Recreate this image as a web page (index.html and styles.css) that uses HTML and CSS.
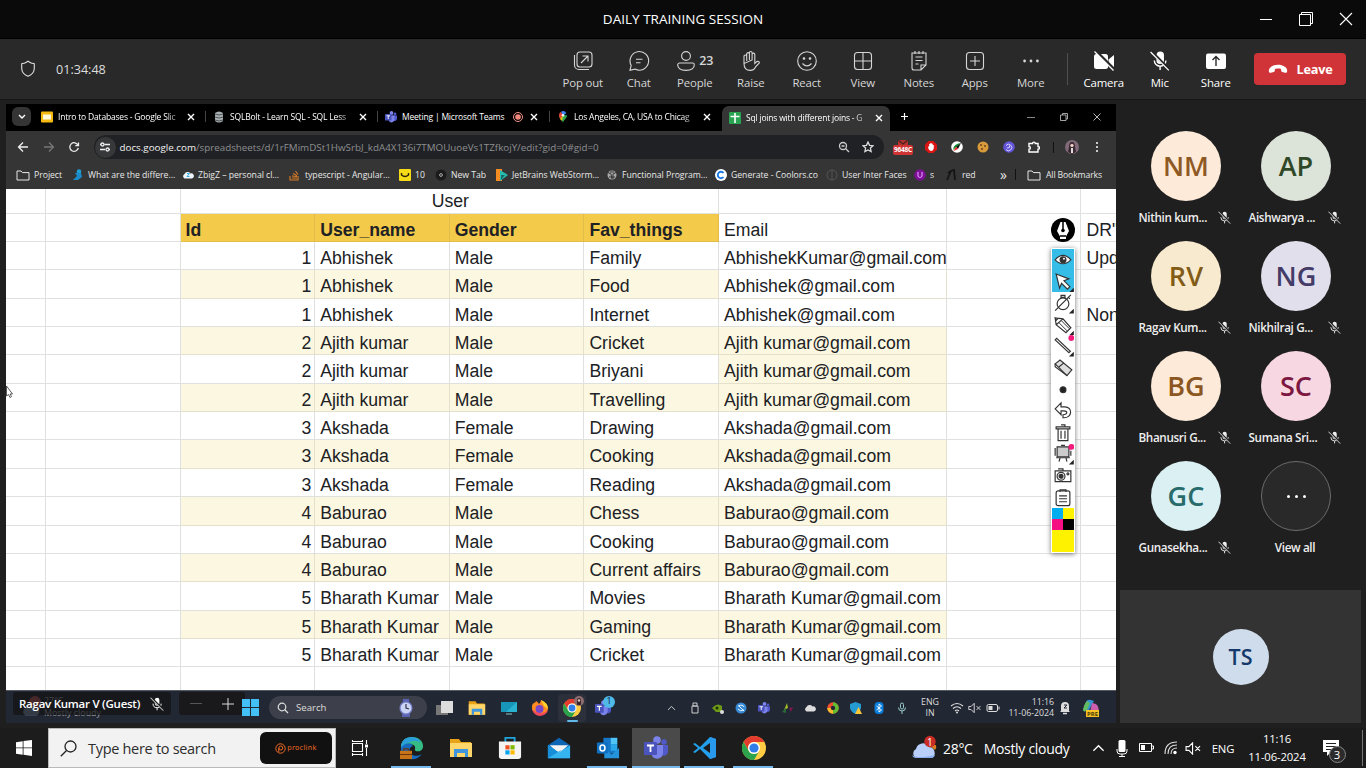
FILE: index.html
```html
<!DOCTYPE html>
<html lang="en">
<head>
<meta charset="utf-8">
<title>DAILY TRAINING SESSION</title>
<link rel="stylesheet" href="styles.css">
</head>
<body>
<svg class="defs" width="0" height="0">
  <symbol id="micoff" viewBox="0 0 20 20"><rect x="7" y="1" width="6.4" height="11.5" rx="3.2" fill="currentColor"/><path d="M4.3 9.5a5.8 5.8 0 0 0 11.6 0M10.1 15.5V19" fill="none" stroke="currentColor" stroke-width="1.4"/><path d="M1.2.5 19.5 18.8" stroke="#242424" stroke-width="3"/><path d="M.6 1 18.8 19.4" stroke="currentColor" stroke-width="1.3"/></symbol>
  <symbol id="x" viewBox="0 0 10 10"><path d="M2 2l6 6M8 2L2 8" stroke="currentColor" stroke-width="1.4"/></symbol>
  <symbol id="folder" viewBox="0 0 14 12"><path d="M1 2h4l1.4 1.6H13V11H1z" fill="none" stroke="currentColor"/></symbol>
  <symbol id="explorer" viewBox="0 0 24 24"><path d="M1 3h9l2 3h10v15H1z" fill="#e8a317"/><path d="M1 7h22v14H1z" fill="#ffd669"/><path d="M5 21v-8h14v8h-3v-4H8v4z" fill="#3f96dc"/></symbol>
  <symbol id="chrome" viewBox="0 0 24 24"><circle cx="12" cy="12" r="12" fill="#fc4"/><path d="M1.6 6A12 12 0 0 1 22.4 6H12a6 6 0 0 0-5.2 9z" fill="#e33b2e"/><path d="M1.6 6A12 12 0 0 0 12 24l5.2-9a6 6 0 0 1-10.4 0z" fill="#2ba24c"/><circle cx="12" cy="12" r="6" fill="#fff"/><circle cx="12" cy="12" r="4.6" fill="#2f7de9"/></symbol>
  <symbol id="teams" viewBox="0 0 24 24"><circle cx="20" cy="6" r="2.8" fill="#5059c9"/><path d="M14 9h10v7a4.500 4.500 0 0 1-7 3z" fill="#5059c9"/><circle cx="13" cy="4" r="3.800" fill="#7b83eb"/><path d="M8 9h11v8a6 6 0 0 1-11 3z" fill="#7b83eb"/><rect y="6" width="13" height="13" rx="1" fill="#4b53bc"/><path d="M3 9.500h7M6.500 9.500V16" stroke="#fff" stroke-width="1.800"/></symbol>
  <symbol id="win" viewBox="0 0 16 16"><path d="M0 0h7.500v7.500H0zM8.500 0H16v7.500H8.500zM0 8.500h7.500V16H0zM8.500 8.500H16V16H8.500z" fill="currentColor"/></symbol>
  <symbol id="mute" viewBox="0 0 18 14"><path d="M1 5h3l4-4v12L4 9H1zM11 4.500l5 5m0-5l-5 5" fill="none" stroke="currentColor" stroke-width="1.200"/></symbol>
  <symbol id="cloud" viewBox="0 0 24 16"><path d="M5 15a5 5 0 0 1 0-9 7 7 0 0 1 12-1 5 5 0 0 1 3 10z" fill="currentColor"/></symbol>
  <symbol id="up" viewBox="0 0 14 8"><path d="M1.500 7L7 1.500 12.500 7" fill="none" stroke="currentColor" stroke-width="1.400"/></symbol>
</svg>

<header class="titlebar">
  <h1>DAILY TRAINING SESSION</h1>
  <div class="winctl">
    <svg width="14" height="14"><path d="M1 7.500h12" stroke="#fff"/></svg>
    <svg width="16" height="16"><path d="M1.500 3.500h11v11h-11zM3.500 3.500v-2h11v11h-2" fill="none" stroke="#fff"/></svg>
    <svg width="14" height="14"><path d="M1 1l12 12M13 1L1 13" stroke="#fff" stroke-width="1.100"/></svg>
  </div>
</header>

<nav class="callbar">
  <div class="timer"><svg width="16" height="18" viewBox="0 0 16 18"><path d="M8 1.300c2 1.600 4 2.300 6.300 2.400V8c0 4-2.500 6.800-6.300 8.300C4.200 14.800 1.700 12 1.700 8V3.700C4 3.600 6 2.900 8 1.300z" fill="none" stroke="#e0e0e0" stroke-width="1.100"/></svg><span>01:34:48</span></div>
  <div class="actions">
    <div class="act"><svg viewBox="0 0 20 20"><rect x="4" y="1" width="15" height="15" rx="3"/><path d="M1.500 4v10a4.500 4.500 0 0 0 4.500 4.500h10M8 12l6.500-6.500M9.500 5h5.500v5.500"/></svg><span>Pop out</span></div>
    <div class="act"><svg viewBox="0 0 20 20"><path d="M1 19.200l1.200-4.800A9.300 9.300 0 1 1 6 18.100zM7 8.300h6.500M7 11.800h4.500"/></svg><span>Chat</span></div>
    <div class="act"><div class="pair"><svg viewBox="0 0 20 20"><circle cx="10" cy="5" r="4.400"/><path d="M3.500 12h13a1.800 1.800 0 0 1 1.800 1.800C18.300 17.500 15 19.400 10 19.400S1.700 17.500 1.700 13.800A1.800 1.800 0 0 1 3.500 12z"/></svg><b>23</b></div><span>People</span></div>
    <div class="act"><svg viewBox="0 0 20 20"><path d="M3 12.500V5.300a1.300 1.300 0 0 1 2.700 0V10M5.700 9V3a1.300 1.300 0 0 1 2.700 0V9M8.400 9V1.900a1.300 1.300 0 0 1 2.700 0V9M11.100 9V3.500a1.300 1.300 0 0 1 2.700 0V12.500l1.700-1.700c1.400-1 3.300 0 2.800 1.200l-3.500 3.500c-1.200 3-2.800 3.900-5.600 3.900C5 19.400 3 17 3 12.500z"/></svg><span>Raise</span></div>
    <div class="act"><svg viewBox="0 0 20 20"><circle cx="10" cy="10" r="9.300"/><path d="M5.500 12.500q4.500 4.800 9 0"/><circle cx="7" cy="7.500" r=".8" fill="currentColor"/><circle cx="13" cy="7.500" r=".8" fill="currentColor"/></svg><span>React</span></div>
    <div class="act"><svg viewBox="0 0 20 20"><rect x="1.500" y="1.500" width="17" height="17" rx="3"/><path d="M10 1.500v17M1.500 10h17"/></svg><span>View</span></div>
    <div class="act"><svg viewBox="0 0 20 20"><path d="M3 2h14v12l-5 5H5a2 2 0 0 1-2-2zM17 14h-5v5M6.500 6h7M6.500 9.500h7M6.500 13h3M6 0v3M10 0v3M14 0v3"/></svg><span>Notes</span></div>
    <div class="act"><svg viewBox="0 0 20 20"><rect x="1.500" y="1.500" width="17" height="17" rx="3"/><path d="M10 5v10M5 10h10"/></svg><span>Apps</span></div>
    <div class="act"><svg viewBox="0 0 20 20"><g fill="currentColor" stroke="none"><circle cx="3.600" cy="10" r="1.400"/><circle cx="10" cy="10" r="1.400"/><circle cx="16.400" cy="10" r="1.400"/></g></svg><span>More</span></div>
  </div>
  <i class="rule"></i>
  <div class="actions bright">
    <div class="act"><svg viewBox="0 0 20 20"><g stroke="none" fill="#fff"><rect y="3" width="14" height="15" rx="2.500"/><path d="M14.500 8.500L20 4v13l-5.500-4z"/></g><path d="M2.500.5L20 18" stroke="#292929" stroke-width="2.600"/><path d="M.5.500L19.500 19.500" stroke="#fff" stroke-width="1.300"/></svg><span>Camera</span></div>
    <div class="act"><svg viewBox="0 0 20 20"><use href="#micoff"/></svg><span>Mic</span></div>
    <div class="act"><svg viewBox="0 0 20 20"><rect x="0" y="2.500" width="20" height="15.500" rx="2" fill="#fff" stroke="none"/><path d="M10 15V6M6.500 9L10 5.500 13.500 9" stroke="#292929" stroke-width="1.400"/></svg><span>Share</span></div>
  </div>
  <button class="leave"><svg width="20" height="10" viewBox="0 0 20 10"><path d="M.8 7C.5 3.500 5 .8 10 .8s9.500 2.700 9.200 6.200c-.2 1.800-1 2-2.200 1.700l-2.700-.6c-1.600-.5-1-2.600-1.300-3.100-1-.8-5-.8-6 0-.3.500.3 2.600-1.300 3.100L3 8.700C1.800 9 1 8.800.8 7z" fill="#fff"/></svg>Leave</button>
</nav>

<main class="stage">
  <section class="share">
    <div class="tabs">
      <div class="tabmenu"><svg width="8" height="6"><path d="M1 1l3 3 3-3" fill="none" stroke="#fff" stroke-width="1.400"/></svg></div>
      <div class="tab"><svg viewBox="0 0 12 12"><rect y=".5" width="12" height="11" rx="1" fill="#f5b912"/><rect x="2" y="3.500" width="8" height="5" fill="#fff8dc"/></svg><span>Intro to Databases - Google Slic</span><svg class="cls"><use href="#x"/></svg></div>
      <div class="tab"><svg viewBox="0 0 12 12"><path d="M2 2q4-3 8 0v8q-4 3-8 0z" fill="#aab0b2"/><path d="M2 3q4 2 8 0M2 6q4 2 8 0M2 9q4 2 8 0" fill="none" stroke="#495152"/></svg><span>SQLBolt - Learn SQL - SQL Less</span><svg class="cls"><use href="#x"/></svg></div>
      <div class="tab rec"><svg viewBox="0 0 24 24"><use href="#teams"/></svg><span>Meeting | Microsoft Teams</span><svg viewBox="0 0 12 12"><circle cx="6" cy="6" r="4.500" fill="none" stroke="#ef938a"/><circle cx="6" cy="6" r="2.800" fill="#f1877b"/></svg><svg class="cls"><use href="#x"/></svg></div>
      <div class="tab"><svg viewBox="0 0 12 12"><path d="M6 12C5.500 8.500 2 7.500 2 4.200h8C10 7.500 6.500 8.500 6 12z" fill="#32a853"/><path d="M2 4.500a4 4 0 0 1 2-3.800l2 3.500L3 8z" fill="#e84335"/><path d="M4 .7A4 4 0 0 1 9.400 2.200L6 4.500z" fill="#4285f4"/><path d="M6 4.500L3 8c1 1 1.500 1.500 2 2z" fill="#fbbc04"/><circle cx="6" cy="4.200" r="1.300" fill="#fff"/></svg><span>Los Angeles, CA, USA to Chicag</span><svg class="cls"><use href="#x"/></svg></div>
      <div class="tab on"><svg viewBox="0 0 12 12"><rect width="12" height="12" rx="1" fill="#2aa351"/><path d="M6 1v10M1.500 4.500h9" stroke="#fff" stroke-width="1.600"/></svg><span>Sql joins with different joins - G</span><svg class="cls"><use href="#x"/></svg></div>
      <svg class="plus" width="9" height="9"><path d="M4.500 1v7M1 4.500h7" stroke="#fff" stroke-width="1.200"/></svg>
      <div class="bctl">
        <svg width="10" height="10"><path d="M1 5.500h8" stroke="#888"/></svg>
        <svg width="10" height="10"><path d="M1.500 3h5.500v5.500H1.500zM3.500 3V1.500h5V7H7" fill="none" stroke="#ccc" stroke-width=".8"/></svg>
        <svg width="10" height="10"><path d="M1.500 1.500l7 7M8.500 1.500l-7 7" stroke="#ccc" stroke-width=".9"/></svg>
      </div>
    </div>
    <div class="address">
      <svg viewBox="0 0 12 12"><path d="M11 6H1.500M6 1.500L1.500 6 6 10.500" stroke="#eee"/></svg>
      <svg viewBox="0 0 12 12"><path d="M1 6h9.500M6 1.500L10.500 6 6 10.500" stroke="#777"/></svg>
      <svg viewBox="0 0 12 12"><path d="M10 4.200A4.300 4.300 0 1 0 10.300 7M10.500 1.500v3.200H7.300" stroke="#eee"/></svg>
      <div class="omni">
        <i class="tune"><svg viewBox="0 0 12 12"><path d="M1 3.500h1M5.500 3.500H11M1 8.500h5M10 8.500H11" stroke="#eee"/><circle cx="3.500" cy="3.500" r="1.500" stroke="#eee"/><circle cx="8.500" cy="8.500" r="1.500" stroke="#eee"/></svg></i>
        <p><b>docs.google.com</b>/spreadsheets/d/1rFMimDSt1HwSrbJ_kdA4X136i7TMOUuoeVs1TZfkojY/edit?gid=0#gid=0</p>
        <svg viewBox="0 0 12 12"><circle cx="5" cy="5" r="3.500" stroke="#ccc"/><path d="M7.500 7.500L11 11M3.500 5h3" stroke="#ccc"/></svg>
        <svg viewBox="0 0 12 12"><path d="M6 1l1.500 3.300 3.500.4-2.600 2.400.7 3.500L6 8.900l-3.100 1.700.7-3.500L1 4.700l3.500-.4z" stroke="#ddd"/></svg>
      </div>
      <div class="exts">
        <div class="mailx"><svg width="10" height="5"><path d="M0 0h10v5H0z" fill="#b3322d"/><path d="M0 0l5 4 5-4" fill="none" stroke="#4a2220"/></svg><b>9648C</b></div>
        <svg viewBox="0 0 12 12"><path d="M3.500 0h5L12 3.500v5L8.500 12h-5L0 8.500v-5z" fill="#d91515" /><path d="M3.200 5.500h1V3h1.100V2h1.200v.7h1.200V4h1.100v3.500Q8 10 6 10T3.200 7z" fill="#fff"/></svg>
        <svg viewBox="0 0 12 12"><circle cx="6" cy="6" r="5.800" fill="#fff"/><path d="M10 2L2 9Q2 3 10 2z" fill="#168c35"/><path d="M5 6l5-4-3 6z" fill="#111"/><path d="M2.500 10l2.500-4 2 2z" fill="#e22"/></svg>
        <svg viewBox="0 0 12 12"><circle cx="6" cy="6" r="5.500" fill="#d99a3b"/><circle cx="4" cy="4" r="1" fill="#6d431b"/><circle cx="8" cy="5" r="1" fill="#6d431b"/><circle cx="5" cy="8" r="1" fill="#6d431b"/></svg>
        <svg viewBox="0 0 12 12"><circle cx="6" cy="6" r="5.800" fill="#6355d8"/><path d="M3 8.500a3.200 3.200 0 1 0 0-4M4 7l2.500-.5V4.500" stroke="#d5d2ff" stroke-width="1"/></svg>
        <svg viewBox="0 0 12 12"><path d="M1 2.500h3.500a1.400 1.400 0 0 1 2.800 0H10v3a1.400 1.400 0 0 1 0 2.800V11H1V8.300a1.400 1.400 0 0 0 0-2.800z" stroke="#fff" stroke-width="1.400"/></svg>
        <i class="bar"></i>
        <svg class="face" viewBox="0 0 14 14"><circle cx="7" cy="7" r="7" fill="#806a78"/><path d="M4 7q0-5 3-5t3 5l1 5-4 2-4-2z" fill="#38272f"/><circle cx="7" cy="5.500" r="1.700" fill="#e8c9c4"/><path d="M6 8h2v5H6z" fill="#ddd"/></svg>
        <svg viewBox="0 0 12 12"><g fill="#eee"><circle cx="6" cy="2" r="1.100"/><circle cx="6" cy="6" r="1.100"/><circle cx="6" cy="10" r="1.100"/></g></svg>
      </div>
    </div>
    <div class="marks">
      <span><svg class="wide"><use href="#folder"/></svg>Project</span>
      <span><svg viewBox="0 0 12 12"><circle cx="7" cy="2.500" r="2.300" fill="#1f9ed4"/><path d="M3 4h6l1 4-4 3H1l4-4z" fill="#188bc8"/></svg>What are the differe...</span>
      <span><svg viewBox="0 0 24 20"><use href="#cloud" color="#eef7ff" height="20"/><path d="M10 7h5l-5 6h5" fill="none" stroke="#38a8e2" stroke-width="2"/></svg>ZbigZ – personal cl...</span>
      <span><svg viewBox="0 0 12 12"><path d="M1 7v4h8V7M3 9h5M3 7l5 .5M4 4.500l4 2M6.500 2L9 5.500" fill="none" stroke="#dc7c26" stroke-width="1.100"/></svg>typescript - Angular...</span>
      <span><svg viewBox="0 0 12 12"><rect width="12" height="12" rx="1" fill="#f5dc16"/><path d="M2.500 4v2q3.500 3 7 0V4" fill="none" stroke="#282508" stroke-width="1.400"/></svg>10</span>
      <span><svg viewBox="0 0 12 12"><circle cx="6" cy="6" r="5.500" fill="#1b1b1b"/><circle cx="6" cy="6" r="1.400" fill="none" stroke="#aaa"/></svg>New Tab</span>
      <span><svg viewBox="0 0 12 12"><path d="M0 0h6v12H0z" fill="#f58c22"/><path d="M4 1l8 5-8 6z" fill="#27bdae"/><path d="M5 6l4 0-4 5z" fill="#186c69"/></svg>JetBrains WebStorm...</span>
      <span><svg viewBox="0 0 12 12"><circle cx="6" cy="6" r="4.500" fill="#aaa"/><path d="M1 3l4 2 1 5M11 3L7 5v5M3 8h6M4 3h4" fill="none" stroke="#333"/></svg>Functional Program...</span>
      <span><svg viewBox="0 0 12 12"><circle cx="6" cy="6" r="6" fill="#fff"/><path d="M8.500 4a3.200 3.200 0 1 0 0 4" fill="none" stroke="#1679e8" stroke-width="1.900"/></svg>Generate - Coolors.co</span>
      <span><svg viewBox="0 0 12 12"><circle cx="6" cy="6" r="5" fill="none" stroke="#555"/><path d="M6 1v10" stroke="#555"/></svg>User Inter Faces</span>
      <span><svg viewBox="0 0 12 12"><circle cx="6" cy="6" r="5.800" fill="#7c1193"/><path d="M4 3v4q2 3 4 0V3" fill="none" stroke="#df90ff" stroke-width="1.200"/></svg>s</span>
      <span><svg viewBox="0 0 12 12"><path d="M1 11L5 2l3-1 1 10M5 2L2 4" fill="none" stroke="#151515" stroke-width="1.800"/></svg>red</span>
      <span class="more">»</span><i class="bar"></i>
      <span class="allmarks"><svg class="wide"><use href="#folder"/></svg>All Bookmarks</span>
    </div>

    <div class="sheet">
      <div class="row first"><p></p><p></p><p class="merged">User</p><p></p><p></p><p></p></div>
      <div class="row head"><p></p><p></p><p>Id</p><p>User_name</p><p>Gender</p><p>Fav_things</p><p>Email</p><p></p><p>DR"</p></div>
      <div class="row"><p></p><p></p><p>1</p><p>Abhishek</p><p>Male</p><p>Family</p><p>AbhishekKumar@gmail.com</p><p></p><p>Upd</p></div>
      <div class="row alt nomail"><p></p><p></p><p>1</p><p>Abhishek</p><p>Male</p><p>Food</p><p>Abhishek@gmail.com</p><p></p><p></p></div>
      <div class="row"><p></p><p></p><p>1</p><p>Abhishek</p><p>Male</p><p>Internet</p><p>Abhishek@gmail.com</p><p></p><p>Non</p></div>
      <div class="row alt"><p></p><p></p><p>2</p><p>Ajith kumar</p><p>Male</p><p>Cricket</p><p>Ajith kumar@gmail.com</p><p></p><p></p></div>
      <div class="row mail"><p></p><p></p><p>2</p><p>Ajith kumar</p><p>Male</p><p>Briyani</p><p>Ajith kumar@gmail.com</p><p></p><p></p></div>
      <div class="row alt"><p></p><p></p><p>2</p><p>Ajith kumar</p><p>Male</p><p>Travelling</p><p>Ajith kumar@gmail.com</p><p></p><p></p></div>
      <div class="row"><p></p><p></p><p>3</p><p>Akshada</p><p>Female</p><p>Drawing</p><p>Akshada@gmail.com</p><p></p><p></p></div>
      <div class="row alt"><p></p><p></p><p>3</p><p>Akshada</p><p>Female</p><p>Cooking</p><p>Akshada@gmail.com</p><p></p><p></p></div>
      <div class="row"><p></p><p></p><p>3</p><p>Akshada</p><p>Female</p><p>Reading</p><p>Akshada@gmail.com</p><p></p><p></p></div>
      <div class="row alt"><p></p><p></p><p>4</p><p>Baburao</p><p>Male</p><p>Chess</p><p>Baburao@gmail.com</p><p></p><p></p></div>
      <div class="row"><p></p><p></p><p>4</p><p>Baburao</p><p>Male</p><p>Cooking</p><p>Baburao@gmail.com</p><p></p><p></p></div>
      <div class="row alt"><p></p><p></p><p>4</p><p>Baburao</p><p>Male</p><p>Current affairs</p><p>Baburao@gmail.com</p><p></p><p></p></div>
      <div class="row"><p></p><p></p><p>5</p><p>Bharath Kumar</p><p>Male</p><p>Movies</p><p>Bharath Kumar@gmail.com</p><p></p><p></p></div>
      <div class="row alt"><p></p><p></p><p>5</p><p>Bharath Kumar</p><p>Male</p><p>Gaming</p><p>Bharath Kumar@gmail.com</p><p></p><p></p></div>
      <div class="row"><p></p><p></p><p>5</p><p>Bharath Kumar</p><p>Male</p><p>Cricket</p><p>Bharath Kumar@gmail.com</p><p></p><p></p></div>
      <div class="row"><p></p><p></p><p></p><p></p><p></p><p></p><p></p><p></p><p></p></div>
      <svg class="cursor" width="8" height="14"><path d="M.5 1v10l2-1.500 1.500 3 1.500-1-1.500-2.500h2.500z" fill="#fff" stroke="#333" stroke-width=".8"/></svg>
      <div class="pen"><svg width="24" height="24" viewBox="0 0 24 24"><circle cx="12" cy="12" r="12"/><path d="M9 21v-2.500L6 13 9.500 4h5L18 13l-3 5.500V21z" fill="#fff"/><path d="M12 3v9M9 18h6" stroke="#000" stroke-width="1.500"/><circle cx="12" cy="12.500" r="1.800"/></svg></div>
      <div class="tools">
        <svg class="sel" viewBox="0 0 22 22"><path d="M3 11q8-9 16 0-8 8-16 0z" fill="#fff"/><circle cx="11" cy="11" r="3" fill="#333"/><circle cx="12" cy="10" r="1" fill="#fff" stroke="none"/></svg>
        <svg class="sel" viewBox="0 0 22 22"><path d="M4 3l13 5-5 2 6 6-2.500 2.500-6-6-2 5z" fill="#fff"/><path class="c" d="M22 17v5h-5z"/></svg>
        <svg viewBox="0 0 22 22"><circle cx="11" cy="12" r="6"/><path d="M9 3.500h4v2H9zM16 5l2 2M19 3L3 19"/><path class="c" d="M22 17v5h-5z"/></svg>
        <svg viewBox="0 0 22 22"><path d="M3 4l8 1 8 9-5 5-10-8zM11 5L4 11M3 4l3 .5-2 2z"/><path d="M7 9l8 8M9.500 7l8 8" stroke-width="1"/><path class="c" d="M22 17v5h-5z"/></svg>
        <svg viewBox="0 0 22 22"><path d="M3 5l14 13 1.500-1.500L4.500 3.500z"/><circle class="m" cx="19.500" cy="3" r="3"/><path class="c" d="M22 17v5h-5z"/></svg>
        <svg viewBox="0 0 22 22"><path d="M3 7l5-4 12 10-5 6z" fill="#ddd"/><path d="M7 10l5-4M3 7v3l12 9"/></svg>
        <svg viewBox="0 0 22 22"><circle cx="11" cy="11" r="3"/></svg>
        <svg viewBox="0 0 22 22"><path d="M3 9l6-6v4h4c8 0 8 12-2 11v-3c5 0 5-4 1-4H9v4z"/></svg>
        <svg viewBox="0 0 22 22"><path d="M6 7h10v12H6zM4 5h14v2H4zM9 3h4v2M9 9v8M13 9v8"/></svg>
        <svg viewBox="0 0 22 22"><path d="M5 4h12v10H5z" fill="#ccc"/><path d="M3 5v8M19 8v5M4 15h14M8 15l-1 4M14 15l1 4M9 2.500h4"/><circle class="m" cx="19.500" cy="4" r="3"/><path class="c" d="M22 17v5h-5z"/></svg>
        <svg viewBox="0 0 22 22"><path d="M3 6h16v11H3zM6 4h5v2"/><circle cx="9" cy="11.500" r="4"/><circle cx="9" cy="11.500" r="2" fill="#333"/><circle cx="16" cy="9" r="1"/></svg>
        <svg viewBox="0 0 22 22"><rect x="4" y="4" width="14" height="15" rx="2"/><path d="M8 5V3h6v2M7 9h8M7 12h8M7 15h8"/></svg>
        <div class="swatch"><i></i><i></i><i></i><i></i></div>
        <div class="yellow"></div>
      </div>
    </div>

    <div class="innerbar">
      <div class="wx"><svg width="22" height="22"><circle cx="14" cy="7" r="6" fill="#b8585e"/><use href="#cloud" x="0" y="9" width="19" height="12" color="#7b8fae"/></svg><p>27°C<br>Mostly cloudy</p></div>
      <div class="speaker">Ragav Kumar V (Guest)<svg><use href="#micoff"/></svg></div>
      <div class="zoomer"><i></i><svg width="12" height="12"><path d="M6 0v12M0 6h12" stroke="#ddd"/></svg></div>
      <svg class="logo"><use href="#win"/></svg>
      <div class="isearch"><svg width="12" height="12"><circle cx="5" cy="5" r="3.800"/><path d="M7.500 7.500L11 11"/></svg><span>Search</span><svg class="watch" width="18" height="18"><path d="M6 0h6l1 18H5z" fill="#5a64b4"/><circle cx="9" cy="9" r="6" fill="#ccd4f6" stroke="#777fc8"/><path d="M9 5v4l3 1" stroke="#334"/></svg></div>
      <div class="iapps">
        <svg viewBox="0 0 18 18"><rect y="6" width="12" height="10" fill="#777"/><rect x="5" y="2" width="12" height="12" fill="#ddd"/></svg>
        <svg><use href="#explorer"/></svg>
        <svg viewBox="0 0 18 18"><path d="M1 3h16v10H1z" fill="#29b3d0"/><path d="M1 3h16L6 13H1z" fill="#1796ba"/><path d="M6 15h6" stroke="#8cc"/></svg>
        <svg viewBox="0 0 18 18"><path d="M1 8C1 3 4 5 5 2q2 1 3 3 2-2 2-4 7 3 7 9a8 7 0 0 1-16-2z" fill="#ff8b22"/><path d="M10 1q7 3 7 9l-4-3z" fill="#ffd42d"/><circle cx="8.500" cy="10" r="4" fill="#7948c6"/><path d="M1 10q2 7 8 7 7-1 8-6-4 4-8 3-4 0-8-4z" fill="#f4495d"/></svg>
        <div class="ichrome"><svg><use href="#chrome"/></svg><svg class="profile" viewBox="0 0 10 10"><circle cx="5" cy="5" r="5" fill="#8d6d70"/><path d="M3 9V5q0-3 2-3t2 3v4z" fill="#3a272c"/><circle cx="5" cy="4.500" r="1.200" fill="#e7cac2"/></svg><i></i></div>
        <div class="iteams"><svg><use href="#teams"/></svg><b>1</b></div>
      </div>
      <div class="itray">
        <svg><use href="#up"/></svg>
        <svg viewBox="0 0 12 12"><path d="M3 4h6v7H3zM4 1h4v3H4z" fill="none" stroke="#ccc"/></svg>
        <svg viewBox="0 0 12 12"><path d="M0 6q5-6 10-2v6H4z" fill="#6d9a18"/><circle cx="5" cy="6" r="1.500" fill="#1d3007"/><circle cx="10" cy="10" r="2" fill="#ddd"/></svg>
        <svg viewBox="0 0 12 12"><circle cx="6" cy="6" r="5.500" fill="#388ad6"/><path d="M3 4q5-2 6 1M3 7q2 3 6 1M4 4l5 5" fill="none" stroke="#e7f5ff"/></svg>
        <svg><use href="#teams"/></svg>
        <svg viewBox="0 0 12 12"><path d="M3 8l3-7 1 5z" fill="#a2bb25"/><path d="M1 10l4-4v5z" fill="#286a35"/><path d="M8 6l4-1-2 5z" fill="#7b184d"/></svg>
        <svg viewBox="0 0 24 18"><use href="#cloud" color="#ddd" height="18"/></svg>
        <svg viewBox="0 0 12 12"><circle cx="6" cy="6" r="4" fill="none" stroke="#ef4e31" stroke-width="3.500"/><path d="M6 2a4 4 0 0 1 0 8" fill="none" stroke="#61bd31" stroke-width="3.500"/><path d="M2 6a4 4 0 0 0 4 4" fill="none" stroke="#f5bc2a" stroke-width="3.500"/></svg>
        <svg viewBox="0 0 12 12"><path d="M5.500 0L11 2v4q-1 4-5.500 6Q1 10 0 6V2z" fill="#269bd1"/><path d="M8.500 5l3.500 7H5z" fill="#f8c839"/></svg>
        <svg viewBox="0 0 12 12"><rect x="1.500" width="9" height="12" rx="4" fill="#0a7fdd"/><path d="M3.500 4l5 4L6 10V2l2.500 2-5 4" fill="none" stroke="#fff" stroke-width=".9"/></svg>
        <svg viewBox="0 0 12 12"><rect x="4.500" y="1" width="3" height="6" rx="1.500" fill="none" stroke="#9cc"/><path d="M2.500 5.500a3.500 3.500 0 0 0 7 0M6 9v3" fill="none" stroke="#9cc"/></svg>
      </div>
      <p class="ilang">ENG<br>IN</p>
      <div class="inet">
        <svg viewBox="0 0 14 12"><path d="M1 4q6-5 12 0M3 6.500q4-3.500 8 0M5 9q2-2 4 0" fill="none" stroke="#ddd" stroke-width="1.100"/><circle cx="7" cy="10.500" r="1" fill="#ddd"/></svg>
        <svg><use href="#mute"/></svg>
        <svg viewBox="0 0 14 12"><rect x="1" y="2.500" width="10.500" height="7" rx="1.500" fill="none" stroke="#ddd"/><path d="M2.500 4h4v4h-4zM12.500 4.500h1v3h-1z" fill="#ddd"/></svg>
      </div>
      <p class="iclock">11:16<br>11-06-2024</p>
      <svg width="12" height="14" viewBox="0 0 12 14"><path d="M2 10V5q0-4 4-4t4 4v5l1 1H1z" fill="#ddd"/><path d="M4 12.500h4" stroke="#ddd" stroke-width="1.500"/><path d="M5 4h3L5 7h3" fill="none" stroke="#242836"/></svg>
      <svg class="pilot" width="17" height="18"><path d="M1 11L4 3q1-3 5-2l3 1-5 9z" fill="#3792d2"/><path d="M5 2q-3 3-4 9 1 3 4 0l3-7z" fill="#63bc61"/><path d="M10 4l4 1q4 3 2 8-4 4-8 0z" fill="#cb5fad"/><rect x="4" y="11" width="13" height="7" fill="#f6c225"/><text x="5" y="17" class="pre">PRE</text></svg>
    </div>
  </section>

  <aside class="people">
    <div class="roster">
      <div class="person"><b class="av nm">NM</b><p><span>Nithin kum...</span><svg><use href="#micoff"/></svg></p></div>
      <div class="person"><b class="av ap">AP</b><p><span>Aishwarya ...</span><svg><use href="#micoff"/></svg></p></div>
      <div class="person"><b class="av rv">RV</b><p><span>Ragav Kum...</span><svg><use href="#micoff"/></svg></p></div>
      <div class="person"><b class="av ng">NG</b><p><span>Nikhilraj G...</span><svg><use href="#micoff"/></svg></p></div>
      <div class="person"><b class="av bg">BG</b><p><span>Bhanusri G...</span><svg><use href="#micoff"/></svg></p></div>
      <div class="person"><b class="av sc">SC</b><p><span>Sumana Sri...</span><svg><use href="#micoff"/></svg></p></div>
      <div class="person"><b class="av gc">GC</b><p><span>Gunasekha...</span><svg><use href="#micoff"/></svg></p></div>
      <div class="person all"><div class="av"><i></i><i></i><i></i></div><p>View all</p></div>
    </div>
    <div class="self"><b>TS</b></div>
  </aside>
</main>

<footer class="taskbar">
  <div class="start"><svg width="16" height="16" viewBox="0 0 16 16"><path d="M0 2.200l6.700-1v6.300H0zM7.500 1.100L16 0v7.500H7.500zM0 8.300h6.700v6.400L0 13.800zM7.500 8.300H16V16l-8.500-1.200z" fill="#fff"/></svg></div>
  <div class="search"><svg width="17" height="17"><circle cx="10.500" cy="6.500" r="5.500"/><path d="M6.500 10.500L.8 16.200"/></svg><span>Type here to search</span><div class="brand"><svg width="11" height="11"><circle cx="5.500" cy="5.500" r="4.700"/><circle cx="5.800" cy="5" r="2"/><path d="M3.800 5v4"/></svg>proclink</div></div>
  <div class="apps">
    <div><svg width="18" height="18" viewBox="0 0 18 18"><path d="M1.500 4.500h10v8h-10zM1.500 1v2M11.500 1v2M1.500 14v3M11.500 14v3M1.500 2.500h10M1.500 15.500h10M15.500 1v4M15.500 9v8" fill="none" stroke="#fff" stroke-width="1.100"/><path d="M14 5.500h3v3h-3z" fill="#fff"/></svg></div>
    <div class="run"><svg class="big" viewBox="0 0 26 26"><path d="M1 13C1 5 6 1 13 1c8 0 12 5 12 10 0 6-8 7-9 4 3-7-9-9-15-2z" fill="#35bc85"/><path d="M1 13C1 5 6 1 13 1q8 1 9 6C15 4 10 5 1 13z" fill="#2b9fd9"/><path d="M1 13c4-6 12-7 13-2-5 1-5 8 1 10 4 1 7 0 9-2-3 5-8 7-13 6-7-1-10-6-10-12z" fill="#1769bd"/><path d="M0 16h13v9H0z" fill="#c87317"/><path d="M4 16v-2h5v2M0 20h13" fill="none" stroke="#6b350d" stroke-width="1.200"/></svg></div>
    <div><svg><use href="#explorer"/></svg></div>
    <div><svg class="big" viewBox="0 0 26 26"><path d="M8 7V2h10v5" fill="none" stroke="#20a5dd" stroke-width="2"/><path d="M1 6h24v16q0 3-3 3H4q-3 0-3-3z" fill="#f4f4f4"/><path d="M8 10h4.500v4.500H8z" fill="#ef5024"/><path d="M13.500 10H18v4.500h-4.500z" fill="#7fba00"/><path d="M8 15.500h4.500V20H8z" fill="#00a4ef"/><path d="M13.500 15.500H18V20h-4.500z" fill="#ffb900"/></svg></div>
    <div><svg class="big" viewBox="0 0 26 26"><path d="M1 10L13 2l12 8v14H1z" fill="#0d65b5"/><path d="M3 10h20l-10 9z" fill="#f1f3f5"/><path d="M1 10l12 8 12-8v14H1z" fill="#36b4ef"/><path d="M1 24l15-9-3 3L1 10z" fill="#168ed8"/></svg></div>
    <div class="run"><svg class="big" viewBox="0 0 26 26"><path d="M8 2h15v17H8z" fill="#1677c8"/><path d="M16 2h7v7h-7z" fill="#50c5f5"/><path d="M16 9h7v7h-7z" fill="#28a8ea"/><path d="M9 24V14l8 6 8-7v11z" fill="#2493dc"/><rect x="1" y="7" width="12" height="12" rx="1" fill="#0f70c2"/><ellipse cx="7" cy="13" rx="2.700" ry="3.200" fill="none" stroke="#fff" stroke-width="1.700"/></svg></div>
    <div class="run active"><svg><use href="#teams"/></svg></div>
    <div class="run"><svg viewBox="0 0 24 24"><path d="M17 1l6 2v18l-6 2L7 13l-5 4-2-1 5-4-5-4 2-1 5 4zM17 7l-7 5 7 5z" fill="#22a0ec" fill-rule="evenodd"/><path d="M17 1l6 2v18l-6 2z" fill="#2899ed"/></svg></div>
    <div class="run"><svg><use href="#chrome"/></svg></div>
  </div>
  <div class="weather"><svg width="26" height="26"><path d="M5 23a5 5 0 0 1 0-9 7 7 0 0 1 13-2 6 6 0 0 1 3 11z" fill="#b9cff9"/><path d="M1 20q5 4 23 0-1 3-4 3H5q-3 0-4-3z" fill="#8aacee"/><path d="M18 10h7q1 3-1 5z" fill="#dd7b20"/><circle cx="19" cy="6.500" r="5.700" fill="#c92c24"/></svg><em>1</em><span>28°C</span><span class="cloudy">Mostly cloudy</span></div>
  <div class="tray">
    <svg width="13" height="8"><use href="#up"/></svg>
    <svg width="12" height="17"><rect x="2.500" width="7" height="12" rx="1.500" fill="#fff"/><path d="M1 9v2q0 3 3 3h4q3 0 3-3V9M6 14v2.500M3 16.500h6" fill="none" stroke="#fff"/></svg>
    <svg width="16" height="10"><path d="M.5.500h12v8H.5zM12.500 3h2v3h-2" fill="none" stroke="#fff"/><path d="M2 2h4v5H2z" fill="#fff"/></svg>
    <svg width="14" height="14"><path d="M1 13Q1 1 13 1M4 13q0-9 9-9M7 13q0-6 6-6" fill="none" stroke="#ddd" stroke-width="1.100"/><circle cx="11" cy="11.500" r="1.700" fill="#fff"/></svg>
    <svg width="17" height="13"><use href="#mute"/></svg>
    <span>ENG</span>
    <p>11:16<br>11-06-2024</p>
    <div class="note"><svg width="18" height="18"><path d="M1 1h16v12H9l-4 4v-4H1z" fill="#fff"/><path d="M4 4.500h10M4 7.500h10M4 10.500h6" stroke="#222"/></svg><b>3</b></div>
  </div>
</footer>
</body>
</html>
```
FILE: styles.css
```css
* { box-sizing: border-box; }
body { margin: 0; width: 1366px; height: 768px; overflow: hidden; display: flex; flex-direction: column; background: #1f1f1f; color: #fff; font-family: "Open Sans", "Noto Sans", sans-serif; }
p, h1 { margin: 0; }
svg { flex: none; }
.defs { position: absolute; }

/* window title */
.titlebar { height: 39px; flex: none; background: #0a0a0a; border-bottom: 1px solid #000; display: grid; grid-template-columns: 1fr auto 1fr; align-items: center; }
.titlebar h1 { grid-column: 2; font-size: 13.5px; font-weight: 400; letter-spacing: .02px; }
.winctl { justify-self: end; display: flex; align-items: center; gap: 25px; padding-right: 13px; }

/* meeting controls */
.callbar { height: 61px; flex: none; background: #292929; border-bottom: 1px solid #171717; display: flex; align-items: center; }
.timer { display: flex; align-items: center; gap: 20px; padding-left: 20px; width: 554.5px; font-size: 12.6px; color: #ddd; }
.actions { display: flex; color: #d6d6d6; }
.act { width: 56px; padding: 4px 0 0 .5px; display: flex; flex-direction: column; align-items: center; gap: 4px; font-size: 11.4px; line-height: 16px; letter-spacing: -.15px; white-space: nowrap; }
.act svg { width: 20px; height: 20px; fill: none; stroke: currentColor; stroke-width: 1.1; overflow: visible; }
.pair { display: flex; height: 20px; gap: 3px; align-items: center; }
.pair b { font-size: 12.5px; font-weight: 600; }
.bright { color: #fff; }
.rule { width: 1px; height: 32px; background: #505050; margin: 0 8px 0 8px; }
.leave { width: 92px; height: 32px; margin-left: 10.500px; border: 0; border-radius: 4px; background: #d13438; color: #fff; font: 700 12.700px "Open Sans", sans-serif; letter-spacing: -.2px; display: flex; align-items: center; justify-content: center; gap: 8px; padding: 0 0 0 1px; }

.stage { height: 628px; flex: none; display: flex; padding: 4px 5px 5px 6px; gap: 4px; }
.share { width: 1110px; height: 619px; overflow: hidden; display: flex; flex-direction: column; font-size: 8.700px; background: #353535; }

/* shared browser */
.tabs { height: 27px; flex: none; background: #000; display: flex; align-items: center; padding: 0 14px 2px 6px; }
.tabmenu { width: 19px; height: 19px; border-radius: 6px; background: #343434; display: flex; align-items: center; justify-content: center; margin-right: 3px; }
.tab { width: 172px; height: 24px; display: grid; grid-template-columns: 12px 122px 10px; gap: 5px; align-items: center; padding: 0 0 0 7px; position: relative; font-size: 8.500px; letter-spacing: -.19px; }
.tab svg { width: 12px; height: 12px; }
.tab .cls { width: 10px; height: 10px; margin-left: 1px; }
.tab span { white-space: nowrap; -webkit-mask: linear-gradient(90deg, #000 88%, #0004); mask: linear-gradient(90deg, #000 88%, #0004); }
.tab:nth-child(n+3):not(.on)::before { content: ""; position: absolute; left: -1px; top: 6px; height: 11px; width: 1px; background: #444; }
.tab.rec { grid-template-columns: 12px 105px 12px 10px; }
.tab.rec .cls { margin-left: 0; }
.tab.rec span { mask: none; -webkit-mask: none; }
.tab.on { width: 168px; height: 25px; margin: 2px 0 -2px; padding-bottom: 2px; background: #353535; border-radius: 7px 7px 0 0; }
.plus { margin-left: 10px; }
.bctl { margin-left: auto; display: flex; gap: 23px; }
.address { height: 32px; flex: none; display: grid; grid-template-columns: 12px 12px 12px 790px 1fr; column-gap: 13.500px; align-items: center; padding-left: 11px; background: #353535; }
.address svg { width: 12px; height: 12px; fill: none; stroke-width: 1.300; }
.omni { height: 24px; border-radius: 12px; background: #202124; display: grid; grid-template-columns: 20px 1fr 12px 12px; align-items: center; column-gap: 12px; padding: 0 10px 0 1px; }
.omni p { font-size: 9.800px; color: #8d8f92; margin-left: -7px; white-space: nowrap; }
.omni b { font-weight: 400; color: #f0f0f0; }
.tune { width: 21px; height: 21px; border-radius: 50%; background: #37383a; display: flex; align-items: center; justify-content: center; }
.exts { display: grid; grid-template-columns: 18px repeat(5, 12px) 1px 14px 12px; column-gap: 13.900px; align-items: center; margin-left: -4px; }
.exts > :nth-child(7) { margin-left: -1px; }
.exts .face { width: 14px; height: 14px; margin-left: -4px; }
.exts > :last-child { margin-left: -6px; }
.mailx { display: flex; flex-direction: column; align-items: center; width: 20px; }
.mailx svg { width: 10px; height: 5px; }
.mailx b { width: 20px; height: 10px; border-radius: 2px; background: #cf3435; text-align: center; font-size: 6.500px; line-height: 10px; letter-spacing: -.2px; }
.bar { display: block; width: 1px; height: 11px; background: #111; }
.marks { height: 26px; flex: none; background: #353535; display: grid; grid-template-columns: 56px 110px 107px 110px 36px 61px 110px 109px 111px 88px 32px 51px 18px 11px 80px; align-items: center; padding: 0 0 3px 10px; white-space: nowrap; color: #e8e8e8; }
.marks span { display: flex; align-items: center; gap: 4px; letter-spacing: -.04px; }
.marks svg { width: 12px; height: 12px; }
.marks svg.wide { width: 14px; }
.marks .more { font-size: 14px; line-height: 10px; padding-left: 3px; }
.marks .allmarks { gap: 5px; padding-left: 1px; letter-spacing: -.15px; }

/* spreadsheet */
.sheet { height: 501px; flex: none; position: relative; overflow: hidden; background: #fff; color: #202124; font: 17.650px/1 "Liberation Sans", Arial, sans-serif; }
.row { height: 28.370px; display: grid; grid-template-columns: 40px 134.600px 134.600px 134.600px 134.600px 134.600px 228px 134.500px 1fr; }
.row p { border: solid #dfe1df; border-width: 0 1px 1px 0; padding: 8px 0 0 5px; white-space: nowrap; overflow: hidden; }
.row p:nth-child(3) { text-align: right; padding-right: 3px; }
.row p:last-child { border-right: 0; }
.row.first .merged { grid-column: span 4; text-align: center; padding: 4px 0 0 2px; }
.row.first { height: 24.600px; }
.row.head p:nth-child(3) { text-align: left; }
.row.head p:nth-child(n+3):nth-child(-n+6) { background: #f4ca4b; border-color: #e3bd49; font-weight: 700; }
.row.alt p:nth-child(n+3):nth-child(-n+7), .row.mail p:nth-child(7) { background: #fcf7e1; border-color: #e5e0cb; }
.row.nomail p:nth-child(7) { background: #fff !important; }
.cursor { position: absolute; left: 0; top: 196px; }
.pen { position: absolute; left: 1045px; top: 29px; }
.tools { position: absolute; left: 1045px; top: 59px; width: 24px; padding: 1px; background: #fff; box-shadow: 0 1px 5px #777; display: flex; flex-direction: column; }
.tools svg { width: 22px; height: 21.600px; fill: none; stroke: #333; stroke-width: 1.200; }
.tools .sel { background: #35bce7; }
.tools svg:nth-child(7) circle { fill: #222; }
.tools .c { fill: #222; stroke: none; }
.tools .m { fill: #f51b7d; stroke: none; }
.swatch { display: grid; grid-template-columns: 11px 11px; }
.swatch i { height: 11px; background: #00adef; }
.swatch i:nth-child(2) { background: #fff200; }
.swatch i:nth-child(3) { background: #f50f83; }
.swatch i:nth-child(4) { background: #000; }
.yellow { height: 22px; background: #fff200; }

/* taskbar inside the shared screen */
.innerbar { height: 33px; flex: none; position: relative; background: #222734; border-top: 1px solid #555a60; display: flex; align-items: center; padding-top: 1px; color: #ddd; font-size: 8.800px; line-height: 11px; white-space: nowrap; }
.wx { position: absolute; left: 15px; top: 4px; display: flex; gap: 1px; color: #9fa0a6; }
.wx p { line-height: 12px; margin-top: 0; letter-spacing: .05px; }
.speaker { position: relative; margin: -8px 0 0 7px; width: 158px; height: 23px; border-radius: 3px; background: rgba(17, 17, 18, .68); display: flex; align-items: center; justify-content: space-between; padding: 0 7px 0 6px; font-size: 11.500px; font-weight: 600; letter-spacing: -.25px; color: #fff; }
.speaker svg { width: 14px; height: 14px; }
.zoomer { margin: -8px 0 0 8px; width: 66px; height: 23px; border-radius: 3px; background: #19191b; display: flex; align-items: center; gap: 20px; padding-left: 11px; }
.zoomer i { width: 12px; height: 1px; background: #555; }
.logo { width: 17px; height: 17px; margin-left: -3px; color: #43c0f5; position: relative; }
.isearch { width: 158px; height: 23px; margin-left: 10px; border-radius: 12px; background: #3d404b; display: flex; align-items: center; gap: 7px; padding: 0 12px 0 8px; font-size: 9.600px; }
.isearch svg { fill: none; stroke: #ddd; stroke-width: 1.200; }
.isearch .watch { margin-left: auto; stroke: none; }
.iapps { display: grid; grid-template-columns: repeat(6, 18px); column-gap: 13.800px; margin-left: 9px; align-items: center; }
.iapps svg { width: 18px; height: 18px; display: block; }
.ichrome { position: relative; display: flex; justify-content: center; margin: 0 -5px; width: 28px; height: 28px; align-items: center; background: #2b303b; border-radius: 4px; }
.ichrome i { position: absolute; bottom: 0; width: 11px; height: 2px; background: #62b9e8; border-radius: 2px; }
.ichrome .profile { position: absolute; right: 2px; top: 2px; width: 10px; height: 10px; }
.iteams { position: relative; }
.iteams svg { width: 16px; }
.iteams b { position: absolute; left: 8px; top: -3px; width: 12px; height: 12px; border-radius: 50%; background: #4fb9e7; color: #124; text-align: center; font-weight: 400; }
.itray { display: grid; grid-template-columns: repeat(11, 12px); column-gap: 11px; margin-left: 53px; align-items: center; }
.itray svg { width: 12px; height: 12px; }
.itray svg:first-child { width: 9px; height: 6px; margin-left: 1px; }
.ilang { width: 24px; margin-left: 10px; text-align: center; }
.inet { display: flex; gap: 4px; margin-left: 8px; }
.inet svg { width: 14px; height: 12px; }
.iclock { width: 50px; margin: 0 5px 0 4px; text-align: right; letter-spacing: -.03px; }
.innerbar .pilot { margin-left: 11px; }
.pre { font: 700 6px "Open Sans", sans-serif; fill: #4a3a08; }

/* participants */
.people { width: 241px; display: flex; flex-direction: column; justify-content: space-between; }
.roster { display: grid; grid-template-columns: 110px 110px; grid-auto-rows: 110px; padding: 27px 0 0 11px; }
.person { display: flex; flex-direction: column; align-items: center; }
.av { width: 70px; height: 70px; border-radius: 50%; display: flex; align-items: center; justify-content: center; padding-bottom: 2px; font-size: 27px; font-weight: 600; letter-spacing: .1px; }
.person p { width: 92px; height: 16px; margin: 8px 0 0 -3px; font-size: 11.700px; line-height: 16px; font-weight: 600; letter-spacing: -.35px; color: #eee; display: flex; justify-content: space-between; align-items: center; white-space: nowrap; }
.person p svg { width: 13px; height: 13px; }
.nm { background: #fdead9; color: #8f5924; }
.ap { background: #dce3d9; color: #304827; }
.rv { background: #f8eacf; color: #825b16; }
.ng { background: #e2dfed; color: #443c67; }
.bg { background: #fdead9; color: #8b561f; }
.sc { background: #f7d7e1; color: #7b1740; }
.gc { background: #daf0f2; color: #286b6b; }
.all .av { border: 1px solid #6b6b6b; background: #292929; gap: 5px; padding: 0; }
.all i { width: 3px; height: 3px; border-radius: 50%; background: #fff; }
.all p { justify-content: center; margin-left: -2px; }
.self { height: 133px; background: #333; display: flex; align-items: center; justify-content: center; }
.self b { width: 56px; height: 56px; border-radius: 50%; background: #cfdceb; color: #14396a; font-size: 21.500px; font-weight: 600; display: flex; align-items: center; justify-content: center; }

/* desktop taskbar */
.taskbar { height: 40px; flex: none; background: #1c1c1c; display: flex; align-items: center; white-space: nowrap; }
.start { width: 48px; display: flex; justify-content: center; }
.search { width: 288px; height: 40px; background: #f2f2f2; border: 1px solid #b9b9b9; color: #2d2d2d; display: flex; align-items: center; padding: 0 3px 0 11px; gap: 11px; font-size: 14.500px; letter-spacing: -.3px; }
.search > svg { fill: none; stroke: #222; stroke-width: 1.300; }
.brand { width: 72px; height: 32px; margin-left: auto; border-radius: 6px; background: #111; color: #ef6b25; font: 7px "DejaVu Sans", sans-serif; letter-spacing: .2px; display: flex; align-items: center; justify-content: center; gap: 1px; }
.brand svg { fill: none; stroke: #ef6b25; }
.apps { display: flex; }
.apps div { width: 49px; height: 40px; display: flex; align-items: center; justify-content: center; position: relative; }
.apps svg { width: 24px; height: 24px; }
.apps > :first-child { width: 48px; margin-right: 3px; }
.apps > :first-child svg { width: 18px; height: 18px; }
.apps .run::after { content: ""; position: absolute; left: 4px; right: 5px; bottom: 0; height: 2px; background: #76b9ed; }
.apps .active { width: 48px; background: #4a4a4a; }
.apps .active::after { left: 0; right: 0; }
.weather { display: flex; align-items: center; position: relative; margin-left: 133px; width: 175px; font-size: 14px; letter-spacing: -.3px; }
.weather em { position: absolute; left: 16px; top: 0; font: 10px "Open Sans", sans-serif; }
.weather span { margin-left: 6px; }
.weather .cloudy { margin-left: 11px; }
.tray { display: grid; grid-template-columns: 24px 23px 27px 22px 23px 36px 72px 30px; align-items: center; justify-items: center; font-size: 11.300px; letter-spacing: -.15px; border-right: 1px solid #777; padding-right: 19px; }
.tray p { text-align: center; line-height: 18px; }
.note { position: relative; height: 18px; margin-left: 5px; }
.note b { position: absolute; left: 7px; top: 7px; width: 17px; height: 17px; border-radius: 50%; border: 1px solid #888; background: #2b2b2b; text-align: center; line-height: 15px; font-weight: 400; }
```
